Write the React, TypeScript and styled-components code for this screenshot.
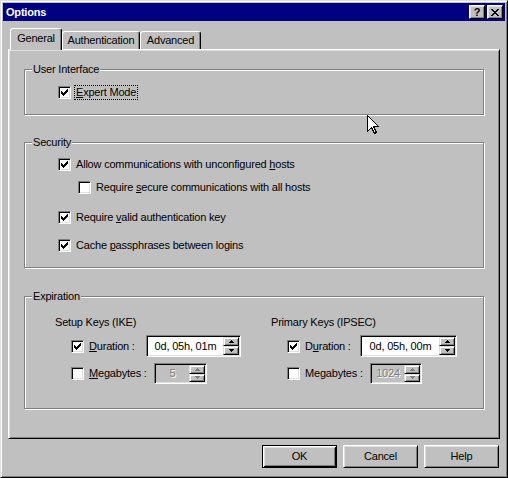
import React from "react";
import styled, { createGlobalStyle } from "styled-components";

const Global = createGlobalStyle`
  html, body { margin: 0; padding: 0; background: #c0c0c0; }
  #root { width: 508px; height: 478px; }
`;

const Window = styled.div`
  position: relative;
  box-sizing: border-box;
  width: 508px;
  height: 478px;
  background: #c0c0c0;
  border: 1px solid;
  border-color: #dfdfdf #000 #000 #dfdfdf;
  box-shadow: inset 1px 1px #fff, inset -1px -1px #808080;
  padding: 2px;
  display: flex;
  flex-direction: column;
  font-family: "Liberation Sans", Arial, sans-serif;
  font-size: 11px;
  letter-spacing: -0.2px;
  color: #000;
`;

const TitleBar = styled.div`
  height: 18px;
  flex: none;
  background: #000080;
  display: flex;
  align-items: center;
  padding: 0 2px;
`;

const TitleText = styled.div`
  flex: 1;
  color: #fff;
  font-weight: bold;
  font-size: 11px;
  line-height: 13px;
  padding-left: 1px;
`;

const TitleButton = styled.div<{ $gap?: number }>`
  box-sizing: border-box;
  width: 16px;
  height: 14px;
  margin-left: ${(p) => p.$gap ?? 0}px;
  background: #c0c0c0;
  border: 1px solid;
  border-color: #fff #000 #000 #fff;
  box-shadow: inset 1px 1px #dfdfdf, inset -1px -1px #808080;
  display: flex;
  align-items: center;
  justify-content: center;
  font-weight: bold;
  font-size: 11px;
  line-height: 11px;
  letter-spacing: 0;
  color: #000;
`;

const Body = styled.div`
  flex: 1;
  display: flex;
  flex-direction: column;
  padding: 6px 5px 0 5px;
`;

const TabRow = styled.div`
  height: 22px;
  display: flex;
  align-items: flex-end;
  padding-left: 2px;
`;

const Tab = styled.div<{ $w: number; $active?: boolean }>`
  box-sizing: border-box;
  width: ${(p) => p.$w}px;
  height: ${(p) => (p.$active ? 22 : 18)}px;
  margin-bottom: ${(p) => (p.$active ? -1 : 0)}px;
  position: relative;
  z-index: ${(p) => (p.$active ? 2 : 1)};
  background: #c0c0c0;
  border-top: 1px solid #fff;
  border-left: 1px solid #fff;
  border-right: 1px solid #000;
  border-radius: 3px 3px 0 0;
  box-shadow: inset -1px 0 #808080;
  display: flex;
  align-items: center;
  justify-content: center;
  line-height: 13px;
  padding-bottom: ${(p) => (p.$active ? 2 : 0)}px;
`;

const Panel = styled.div`
  box-sizing: border-box;
  height: 390px;
  border: 1px solid;
  border-color: #fff #000 #000 #fff;
  box-shadow: inset 1px 1px #dfdfdf, inset -1px -1px #808080;
  padding: 19px 15px 0 15px;
  display: flex;
  flex-direction: column;
`;

const Group = styled.div<{ $h: number; $mt?: number; $pt: number }>`
  position: relative;
  box-sizing: border-box;
  height: ${(p) => p.$h}px;
  margin-top: ${(p) => p.$mt ?? 0}px;
  padding-top: ${(p) => p.$pt}px;
  border: 1px solid #808080;
  box-shadow: inset 1px 1px #fff, 1px 1px #fff;
  display: flex;
  flex-direction: column;
`;

const GroupLabel = styled.div`
  position: absolute;
  top: -7px;
  left: 7px;
  padding: 0 1px;
  background: #c0c0c0;
  line-height: 13px;
`;

const CheckRow = styled.div<{ $indent: number; $mt?: number }>`
  display: flex;
  align-items: center;
  height: 15px;
  margin-top: ${(p) => p.$mt ?? 0}px;
  padding-left: ${(p) => p.$indent}px;
`;

const Box = styled.span`
  box-sizing: border-box;
  flex: none;
  width: 13px;
  height: 13px;
  background: #fff;
  border: 1px solid;
  border-color: #808080 #fff #fff #808080;
  box-shadow: inset 1px 1px #000, inset -1px -1px #dfdfdf;
  display: flex;
  align-items: center;
  justify-content: center;
`;

const Label = styled.span<{ $focus?: boolean; $w?: number }>`
  box-sizing: border-box;
  margin-left: 3px;
  padding: 0 1px;
  line-height: 13px;
  border: 1px dotted ${(p) => (p.$focus ? "#000" : "transparent")};
  white-space: nowrap;
  ${(p) => (p.$w ? `width: ${p.$w}px;` : "")}
`;

const U = styled.span`
  text-decoration: underline;
  text-underline-offset: 1px;
`;

const Columns = styled.div`
  display: grid;
  grid-template-columns: 216px 1fr;
  padding-left: 30px;
`;

const Column = styled.div`
  display: flex;
  flex-direction: column;
`;

const SubHead = styled.div`
  line-height: 13px;
  height: 13px;
`;

const FieldRow = styled.div<{ $h: number; $mt: number }>`
  display: flex;
  align-items: center;
  height: ${(p) => p.$h}px;
  margin-top: ${(p) => p.$mt}px;
  padding-left: 16px;
`;

const SpinBox = styled.div<{ $w: number; $h: number; $disabled?: boolean }>`
  box-sizing: border-box;
  width: ${(p) => p.$w}px;
  height: ${(p) => p.$h}px;
  background: ${(p) => (p.$disabled ? "#c0c0c0" : "#fff")};
  border: 1px solid;
  border-color: #808080 #fff #fff #808080;
  box-shadow: inset 1px 1px #000, inset -1px -1px #dfdfdf;
  padding: 1px;
  display: flex;
`;

const SpinText = styled.div<{ $disabled?: boolean }>`
  flex: 1;
  display: flex;
  align-items: center;
  justify-content: center;
  line-height: 13px;
  color: ${(p) => (p.$disabled ? "#808080" : "#000")};
  text-shadow: ${(p) => (p.$disabled ? "1px 1px #fff" : "none")};
`;

const SpinButtons = styled.div`
  width: 16px;
  display: flex;
  flex-direction: column;
`;

const SpinButton = styled.div`
  flex: 1;
  box-sizing: border-box;
  background: #c0c0c0;
  border: 1px solid;
  border-color: #dfdfdf #000 #000 #dfdfdf;
  box-shadow: inset 1px 1px #fff, inset -1px -1px #808080;
  display: flex;
  align-items: center;
  justify-content: center;
`;

const Footer = styled.div`
  display: flex;
  justify-content: flex-end;
  gap: 6px;
  margin-top: 6px;
  padding-right: 1px;
`;

const Button = styled.div<{ $default?: boolean }>`
  box-sizing: border-box;
  width: 75px;
  height: 23px;
  background: #c0c0c0;
  display: flex;
  align-items: center;
  justify-content: center;
  line-height: 13px;
  border: 1px solid;
  border-color: ${(p) => (p.$default ? "#000" : "#fff #000 #000 #fff")};
  box-shadow: ${(p) =>
    p.$default
      ? "inset 1px 1px #fff, inset -1px -1px #000, inset 2px 2px #dfdfdf, inset -2px -2px #808080"
      : "inset 1px 1px #dfdfdf, inset -1px -1px #808080"};
`;

const Cursor = styled.svg`
  position: absolute;
  left: 366px;
  top: 114px;
  z-index: 5;
`;

const Check = () => (
  <svg width="7" height="7" viewBox="0 0 7 7" shapeRendering="crispEdges">
    <path
      fill="#000"
      d="M6 0h1v3h-1zM5 1h1v3h-1zM4 2h1v3h-1zM3 3h1v3h-1zM2 4h1v3h-1zM1 3h1v3h-1zM0 2h1v3h-1z"
    />
  </svg>
);

const CheckBox = ({ checked }: { checked?: boolean }) => <Box>{checked && <Check />}</Box>;

const Arrow = ({ up, color = "#000" }: { up?: boolean; color?: string }) => (
  <svg width="5" height="3" viewBox="0 0 5 3" shapeRendering="crispEdges">
    {up ? (
      <path fill={color} d="M2 0h1v1h-1zM1 1h3v1h-3zM0 2h5v1h-5z" />
    ) : (
      <path fill={color} d="M0 0h5v1h-5zM1 1h3v1h-3zM2 2h1v1h-1z" />
    )}
  </svg>
);

const Spinner = ({
  value,
  w,
  h,
  disabled,
}: {
  value: string;
  w: number;
  h: number;
  disabled?: boolean;
}) => (
  <SpinBox $w={w} $h={h} $disabled={disabled}>
    <SpinText $disabled={disabled}>{value}</SpinText>
    <SpinButtons>
      <SpinButton>
        <Arrow up color={disabled ? "#808080" : "#000"} />
      </SpinButton>
      <SpinButton>
        <Arrow color={disabled ? "#808080" : "#000"} />
      </SpinButton>
    </SpinButtons>
  </SpinBox>
);

const CloseGlyph = () => (
  <svg width="8" height="7" viewBox="0 0 8 7" shapeRendering="crispEdges">
    <path
      fill="#000"
      d="M0 0h2v1h-2zM6 0h2v1h-2zM1 1h2v1h-2zM5 1h2v1h-2zM2 2h4v1h-4zM3 3h2v1h-2zM2 4h4v1h-4zM1 5h2v1h-2zM5 5h2v1h-2zM0 6h2v1h-2zM6 6h2v1h-2z"
    />
  </svg>
);

export default function App() {
  return (
    <>
      <Global />
      <Window>
        <TitleBar>
          <TitleText>Options</TitleText>
          <TitleButton>?</TitleButton>
          <TitleButton $gap={2}>
            <CloseGlyph />
          </TitleButton>
        </TitleBar>
        <Body>
          <TabRow>
            <Tab $w={52} $active>
              General
            </Tab>
            <Tab $w={78}>Authentication</Tab>
            <Tab $w={61}>Advanced</Tab>
          </TabRow>
          <Panel>
            <Group $h={46} $pt={15}>
              <GroupLabel>User Interface</GroupLabel>
              <CheckRow $indent={33}>
                <CheckBox checked />
                <Label $focus>
                  <U>E</U>xpert Mode
                </Label>
              </CheckRow>
            </Group>

            <Group $h={126} $mt={27} $pt={14}>
              <GroupLabel>Security</GroupLabel>
              <CheckRow $indent={33}>
                <CheckBox checked />
                <Label>
                  Allow communications with unconfigured <U>h</U>osts
                </Label>
              </CheckRow>
              <CheckRow $indent={53} $mt={8}>
                <CheckBox />
                <Label>
                  Require <U>s</U>ecure communications with all hosts
                </Label>
              </CheckRow>
              <CheckRow $indent={33} $mt={15}>
                <CheckBox checked />
                <Label>
                  Require <U>v</U>alid authentication key
                </Label>
              </CheckRow>
              <CheckRow $indent={33} $mt={13}>
                <CheckBox checked />
                <Label>
                  Cache <U>p</U>assphrases between logins
                </Label>
              </CheckRow>
            </Group>

            <Group $h={113} $mt={28} $pt={19}>
              <GroupLabel>Expiration</GroupLabel>
              <Columns>
                <Column>
                  <SubHead>Setup Keys (IKE)</SubHead>
                  <FieldRow $h={22} $mt={6}>
                    <CheckBox checked />
                    <Label $w={59}>
                      <U>D</U>uration :
                    </Label>
                    <Spinner value="0d, 05h, 01m" w={95} h={22} />
                  </FieldRow>
                  <FieldRow $h={21} $mt={6}>
                    <CheckBox />
                    <Label $w={67}>
                      <U>M</U>egabytes :
                    </Label>
                    <Spinner value="5" w={53} h={21} disabled />
                  </FieldRow>
                </Column>
                <Column>
                  <SubHead>Primary Keys (IPSEC)</SubHead>
                  <FieldRow $h={22} $mt={6}>
                    <CheckBox checked />
                    <Label $w={57}>
                      D<U>u</U>ration :
                    </Label>
                    <Spinner value="0d, 05h, 00m" w={97} h={22} />
                  </FieldRow>
                  <FieldRow $h={21} $mt={6}>
                    <CheckBox />
                    <Label $w={67}>
                      Me<U>g</U>abytes :
                    </Label>
                    <Spinner value="1024" w={52} h={21} disabled />
                  </FieldRow>
                </Column>
              </Columns>
            </Group>
          </Panel>
          <Footer>
            <Button $default>OK</Button>
            <Button>Cancel</Button>
            <Button>Help</Button>
          </Footer>
        </Body>
        <Cursor width="13" height="20" viewBox="0 0 13 20" shapeRendering="crispEdges">
          <path
            d="M0.5 0.5 L0.5 16.5 L4.5 12.5 L7.5 18.5 L9.5 17.5 L6.5 11.5 L11.5 11.5 Z"
            fill="#fff"
            stroke="#000"
            strokeWidth="1"
          />
        </Cursor>
      </Window>
    </>
  );
}
